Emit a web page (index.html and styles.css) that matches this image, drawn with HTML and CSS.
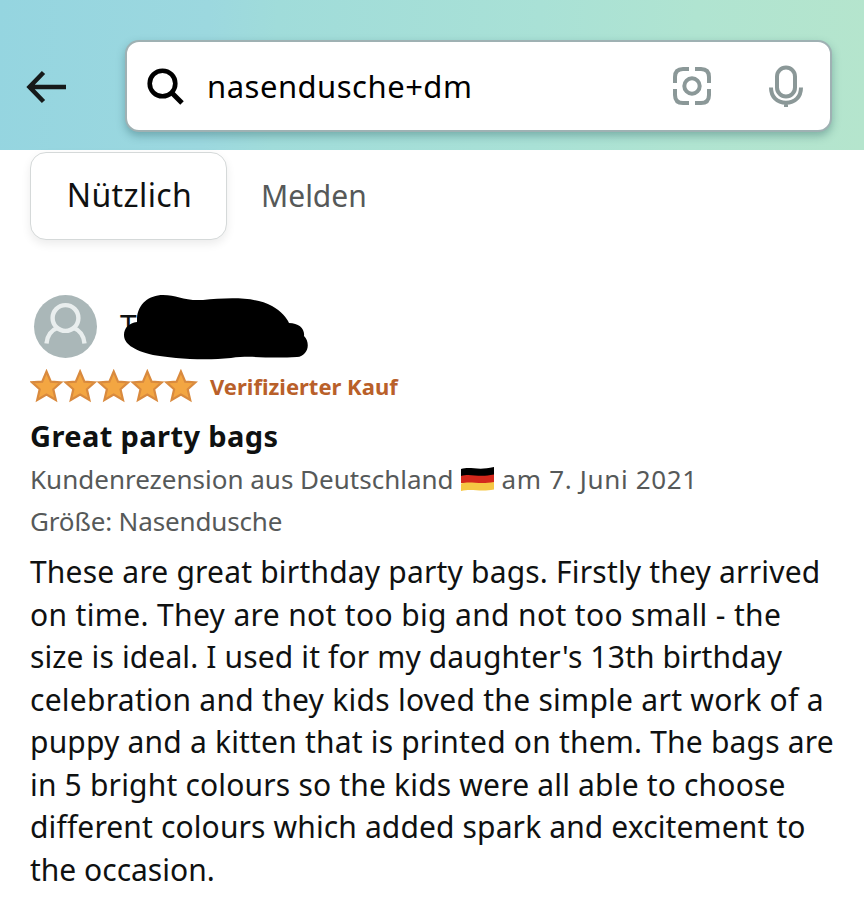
FILE: index.html
```html
<!DOCTYPE html>
<html lang="de">
<head>
    <meta charset="UTF-8">
    <title>nasendusche+dm</title>
    <link rel="stylesheet" href="styles.css">
</head>
<body>
    <header class="topbar">
        <svg class="back" viewBox="0 0 42 34" width="42" height="34">
            <path d="M41 17H5M18.500 2.500L4.500 17L18.500 31.500" fill="none" stroke="#161a1a" stroke-width="4.500"/>
        </svg>
        <div class="search-box">
            <svg class="search-icon" viewBox="0 0 38 38" width="38" height="38">
                <circle cx="15.500" cy="15.500" r="12.800" fill="none" stroke="#000" stroke-width="4.600"/>
                <path d="M24.500 24.500L35 35" stroke="#000" stroke-width="5"/>
            </svg>
            <span class="query">nasendusche+dm</span>
            <svg class="lens" viewBox="0 0 38 38" width="38" height="38" fill="none" stroke="#8b9898" stroke-width="4">
                <path d="M16 2H10Q2 2 2 10V16M22 2H28Q36 2 36 10V16M36 22V28Q36 36 28 36H22M16 36H10Q2 36 2 28V22"/>
                <circle cx="19" cy="19" r="7.700"/>
            </svg>
            <svg class="mic" viewBox="0 0 34 42" width="34" height="42" fill="none" stroke="#8b9898" stroke-width="4">
                <rect x="8" y="2.500" width="18" height="29" rx="9"/>
                <path d="M2 22.500C2 32 8 37.800 17 37.800S32 32 32 22.500M17 37V42"/>
            </svg>
        </div>
    </header>

    <main class="content">
        <div class="actions">
            <button class="helpful">Nützlich</button>
            <span class="report">Melden</span>
        </div>

        <div class="profile">
            <svg class="avatar" viewBox="0 0 64 64" width="64" height="64">
                <circle cx="32.500" cy="32.500" r="31.500" fill="#aab7b8"/>
                <g fill="none" stroke="#e9eeee" stroke-width="4.400">
                    <circle cx="32.500" cy="24" r="12.900"/>
                    <path d="M13.500 49.500C14 43 17.500 36.500 25 33.500M40 33.500C47.500 36.500 51 43 51.500 49.500"/>
                </g>
            </svg>
            <div class="name">
                <span>T</span>
                <svg class="scribble" viewBox="0 0 186 66" width="186" height="66">
                    <path d="M14 24C15 10 26 1 40 1C54 1 60 7 80 6C102 4 131 2 149 12C158 17 164 24 166 29C176 29 182 35 181 42C188 49 185 62 174 63C142 65 130 61 108 64C78 67 48 64 30 61C9 56 1 49 1 41C1 34 6 29 14 28Z"/>
                </svg>
            </div>
        </div>

        <div class="rating">
            <svg class="stars" viewBox="0 0 168 34" width="168" height="34">
                <defs>
                    <path id="star" d="M16.500 2.500L20.800 12.600L31 13.300L23.300 20.300L25.800 31L16.500 25.600L7.200 31L9.700 20.300L2 13.300L12.200 12.600Z"/>
                </defs>
                <g fill="#f3a642" stroke="#d98a3e" stroke-width="2.200">
                    <use href="#star"/>
                    <use href="#star" x="33.600"/>
                    <use href="#star" x="67.200"/>
                    <use href="#star" x="100.800"/>
                    <use href="#star" x="134.400"/>
                </g>
            </svg>
            <span class="verified">Verifizierter Kauf</span>
        </div>

        <h1 class="title">Great party bags</h1>

        <div class="meta">
            <span class="origin">Kundenrezension aus Deutschland</span>
            <svg class="flag" viewBox="0 0 33 24" width="33" height="24">
                <path d="M0 2C10 -1 16 4 33 0V9H0Z" fill="#000"/>
                <path d="M0 9C10 6 17 11 33 7.500V16H0Z" fill="#d4281c"/>
                <path d="M0 16.500C10 13.500 17 18 33 15V22.500C18 25.500 12 21 0 24Z" fill="#f6c744"/>
            </svg>
            <span class="date">am 7. Juni 2021</span>
        </div>
        <div class="meta variant">Größe: Nasendusche</div>

        <p class="review">
            <span class="l1">These are great birthday party bags. Firstly they arrived</span>
            <span class="l2">on time. They are not too big and not too small - the</span>
            <span class="l3">size is ideal. I used it for my daughter's 13th birthday</span>
            <span class="l4">celebration and they kids loved the simple art work of a</span>
            <span class="l5">puppy and a kitten that is printed on them. The bags are</span>
            <span class="l6">in 5 bright colours so the kids were all able to choose</span>
            <span class="l7">different colours which added spark and excitement to</span>
            <span class="l8">the occasion.</span>
        </p>
    </main>
</body>
</html>
```
FILE: styles.css
```css
* {
    margin: 0;
    padding: 0;
    box-sizing: border-box;
}

body {
    font-family: 'Noto Sans', 'Open Sans', sans-serif;
    background: #fff;
    color: #0f1111;
    width: 864px;
    height: 902px;
    overflow: hidden;
}

.topbar {
    height: 150px;
    display: flex;
    align-items: center;
    padding: 22px 32px 0 25px;
    background: linear-gradient(93deg, #95d5e0 0%, #9cd8df 24%, #a0dcda 32%, #a9e1d6 62%, #b0e4d1 80%, #b5e5cd 100%);
}

.back {
    margin-top: 2px;
}

.search-box {
    margin-left: 58px;
    flex: 1;
    height: 92px;
    display: flex;
    align-items: center;
    padding: 0 27px 0 20px;
    background: #fff;
    border: 2px solid #9fb1b3;
    border-radius: 14px;
    box-shadow: 0 4px 9px rgba(30, 80, 85, 0.35);
}

.search-icon {
    margin-top: 2px;
}

.query {
    margin-left: 22px;
    flex: 1;
    font-size: 31px;
    line-height: 40px;
    letter-spacing: 0.5px;
    color: #000;
}

.mic {
    margin-left: 58px;
}

.content {
    padding: 2px 0 0 30px;
}

.actions {
    display: flex;
    align-items: center;
    gap: 34px;
}

.helpful {
    width: 197px;
    height: 88px;
    padding: 0 0 3px 2px;
    font: 32px 'Noto Sans', sans-serif;
    letter-spacing: 0.4px;
    color: #0f1111;
    background: #fff;
    border: 1.5px solid #d5d9d9;
    border-radius: 16px;
    box-shadow: 0 4px 10px rgba(15, 17, 17, 0.08);
}

.report {
    padding-bottom: 2px;
    font-size: 30px;
    color: #565959;
}

.profile {
    display: flex;
    align-items: center;
    height: 64px;
    margin: 54px 0 0 3px;
}

.name {
    position: relative;
    margin-left: 23px;
    font-size: 30px;
    line-height: 44px;
}

/* covers the reviewer's name */
.scribble {
    position: absolute;
    left: 3px;
    top: -10px;
}

.rating {
    display: flex;
    align-items: center;
    height: 34px;
    margin-top: 11px;
}

.verified {
    margin-left: 12px;
    font-size: 22px;
    font-weight: 700;
    color: #b9602a;
}

.title {
    margin-top: 12px;
    font-size: 29px;
    line-height: 42px;
    letter-spacing: 0.4px;
    font-weight: 700;
}

.meta {
    display: flex;
    align-items: center;
    height: 42px;
    margin-top: 1px;
    font-size: 26px;
    color: #565959;
    white-space: nowrap;
}

.flag {
    margin: 0 8px 0 7px;
}

.date {
    letter-spacing: 0.65px;
}

.variant {
    margin-top: 0;
    letter-spacing: -0.15px;
}

.review {
    margin-top: 9px;
    font-size: 30px;
    line-height: 42.5px;
}

/* one row per line, tracked to fill the column */
.review span {
    display: block;
    width: max-content;
}

.l1 { letter-spacing: 0.19px; }
.l2 { letter-spacing: 0.35px; }
.l3 { letter-spacing: 0.13px; }
.l4 { letter-spacing: 0.27px; }
.l5 { letter-spacing: 0.19px; }
.l6 { letter-spacing: 0.18px; }
.l7 { letter-spacing: 0.13px; }
```
